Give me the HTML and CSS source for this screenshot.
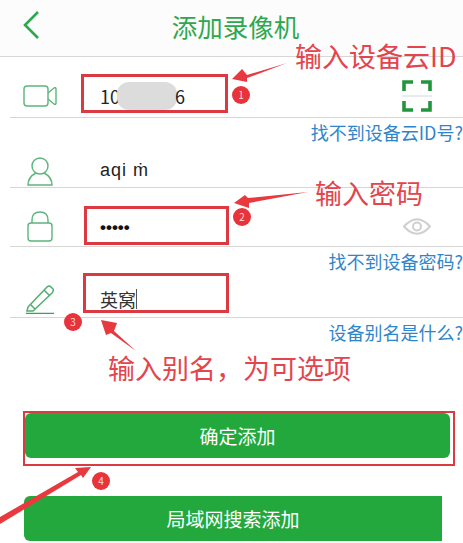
FILE: index.html
```html
<!DOCTYPE html>
<html lang="zh-CN">
<head>
    <meta charset="UTF-8">
    <meta name="viewport" content="width=device-width, initial-scale=1.0">
    <title>添加录像机</title>
    <link rel="stylesheet" href="styles.css">
</head>
<body>
    <div class="page">
        <div class="header">
            <svg class="back" width="20" height="30" viewBox="0 0 20 30"><path d="M17 2 L4 15 L17 28" fill="none" stroke="#2ea84f" stroke-width="2.6"/></svg>
            <h1>添加录像机</h1>
        </div>

        <div class="row row-id">
            <div class="row-icon">
                <svg width="34" height="22" viewBox="0 0 34 22" fill="none" stroke="#5db47c" stroke-width="1.4"><rect x="1" y="1" width="24" height="20" rx="3"/><path d="M25 8 L31 3 Q33 2 33 4 V18 Q33 20 31 19 L25 14"/></svg>
            </div>
            <div class="value">10<span class="smudge"></span><span class="tail">6</span></div>
            <svg class="scan" width="30" height="32" viewBox="0 0 30 32" fill="none" stroke="#23963c" stroke-width="3.6"><path d="M2 11 V2 H11 M19 2 H28 V11 M2 21 V30 H11 M19 30 H28 V21"/><path d="M0 16 H30" stroke="#d6d6d6" stroke-width="1"/></svg>
        </div>
        <div class="hint hint-id">找不到设备云ID号?</div>

        <div class="row row-user">
            <div class="row-icon">
                <svg width="26" height="29" viewBox="0 0 26 29" fill="none" stroke="#5db47c" stroke-width="1.4"><circle cx="13" cy="9" r="8"/><path d="M9 16 Q1 20 1 28 H25 Q25 20 17 16"/></svg>
            </div>
            <div class="value value-user">aqi ṁ</div>
        </div>

        <div class="row row-pass">
            <div class="row-icon">
                <svg width="26" height="31" viewBox="0 0 26 31" fill="none" stroke="#5db47c" stroke-width="1.4"><rect x="1" y="12" width="24" height="18" rx="3"/><path d="M5 12 V9 Q5 1 13 1 Q21 1 21 9 V12"/></svg>
            </div>
            <div class="value dots">•••••</div>
            <svg class="eye" width="28" height="19" viewBox="0 0 28 19" fill="none" stroke="#cfcfcf" stroke-width="2"><path d="M1 9.5 Q14 -5 27 9.5 Q14 24 1 9.5 Z"/><circle cx="14" cy="9.5" r="4"/></svg>
        </div>
        <div class="hint hint-pass">找不到设备密码?</div>

        <div class="row row-name">
            <div class="row-icon">
                <svg width="30" height="30" viewBox="0 0 30 30" fill="none" stroke="#4fae6f" stroke-width="1.5"><path d="M3 23 L22 3 Q24 1 26 3 L28 5 Q29 7 27 9 L8 27 L2 27 Z M19 6 L25 12 M5 20 L10 25"/><path d="M1 29.5 H29" stroke="#2ea84f"/></svg>
            </div>
            <div class="value value-name">英窝<span class="caret"></span></div>
        </div>
        <div class="hint">设备别名是什么?</div>

        <button class="btn btn-add">确定添加</button>
        <button class="btn btn-lan">局域网搜索添加</button>

        <!-- red notes drawn over the screenshot -->
        <div class="mark mark-1"></div>
        <div class="mark mark-2"></div>
        <div class="mark mark-3"></div>
        <div class="mark mark-4"></div>

        <svg class="arrows" width="463" height="543" viewBox="0 0 463 543" fill="#e8393f">
            <polygon points="287,63 247,75 242,69 232,79 247,82 247,78"/>
            <polygon points="308,192 248,198 245,195 234,203 249,208 249,203"/>
            <polygon points="136,351 114,331 117,323 101,320 106,335 111,333"/>
            <polygon points="0,517 78,472 75,468 91,467 83,478 81,475 0,524"/>
        </svg>

        <span class="badge badge-1">1</span>
        <span class="badge badge-2">2</span>
        <span class="badge badge-3">3</span>
        <span class="badge badge-4">4</span>

        <div class="note note-id">输入设备云ID</div>
        <div class="note note-pass">输入密码</div>
        <div class="note note-name">输入别名，为可选项</div>
    </div>
</body>
</html>
```

FILE: styles.css
```css
* {
    box-sizing: border-box;
}
html, body {
    margin: 0;
    padding: 0;
    background-color: white;
}
body {
    font-family: "Noto Sans CJK SC", "Liberation Sans", sans-serif;
}
.page {
    position: relative;
    width: 463px;
    height: 543px;
    overflow: hidden;
    background-color: white;
}
.header {
    display: flex;
    align-items: center;
    justify-content: center;
    position: relative;
    height: 57px;
    padding-left: 8px;
    background-color: #fcfcfc;
    border-bottom: 1px solid #d6d6d6;
}
.header h1 {
    margin: 0 0 5px 0;
    font-size: 25.5px;
    font-weight: 400;
    color: #2ea84f;
}
.back {
    position: absolute;
    left: 21px;
    top: 10px;
}
.row {
    display: flex;
    align-items: center;
    margin-left: 10px;
    border-bottom: 1px solid #d6d6d6;
}
.row-id {
    height: 61px;
    padding-top: 18px;
}
.row-user {
    height: 42px;
    padding-top: 10px;
}
.row-pass {
    height: 59px;
    padding-top: 18px;
}
.row-name {
    height: 43px;
    padding-top: 6px;
}
.row-icon {
    display: flex;
    justify-content: center;
    width: 90px;
    padding-right: 30px;
}
.value {
    flex: 1;
    display: flex;
    align-items: center;
    font-size: 18px;
    color: #222;
}
.smudge {
    width: 60px;
    height: 28px;
    margin-left: -3px;
    background-color: #dcdcdc;
    border-radius: 12px;
}
.tail {
    margin-left: -2px;
}
.value-user {
    font-family: "Liberation Sans", sans-serif;
    font-size: 18px;
    letter-spacing: 1px;
    margin-top: -2px;
}
.dots {
    font-family: "Liberation Sans", sans-serif;
    font-size: 17px;
    line-height: 20px;
    margin-top: 4px;
    font-weight: 700;
    color: #111;
}
.value-name {
    font-size: 18px;
    color: #333;
}
.caret {
    width: 1px;
    height: 20px;
    background-color: #555;
}
.scan {
    margin-right: 31px;
}
.eye {
    margin-right: 32px;
}
.hint {
    height: 28px;
    line-height: 28px;
    text-align: right;
    font-size: 18px;
    color: #2f85c9;
}
.btn {
    display: block;
    border: none;
    height: 45px;
    padding: 0;
    border-radius: 6px;
    background-color: #22a83c;
    color: white;
    font-family: inherit;
    font-size: 19px;
}
.btn-add {
    width: 425px;
    margin: 67px 0 0 25px;
}
.btn-lan {
    width: 418px;
    margin: 38px 0 0 24px;
    border-radius: 6px 0 0 6px;
}
.mark {
    position: absolute;
    border: 3px solid #dc3a42;
}
.mark-1 {
    left: 81px;
    top: 74px;
    width: 147px;
    height: 39px;
}
.mark-2 {
    left: 84px;
    top: 206px;
    width: 145px;
    height: 39px;
}
.mark-3 {
    left: 83px;
    top: 273px;
    width: 146px;
    height: 40px;
}
.mark-4 {
    left: 23px;
    top: 411px;
    width: 432px;
    height: 55px;
    border-width: 2.5px;
}
.arrows {
    position: absolute;
    left: 0;
    top: 0;
}
.badge {
    position: absolute;
    width: 18px;
    height: 18px;
    line-height: 18px;
    border-radius: 50%;
    background-color: #e8333a;
    color: #fbdcdc;
    font-size: 10px;
    text-align: center;
}
.badge-1 {
    left: 232px;
    top: 86px;
}
.badge-2 {
    left: 233px;
    top: 208px;
}
.badge-3 {
    left: 64px;
    top: 313px;
}
.badge-4 {
    left: 92px;
    top: 472px;
}
.note {
    position: absolute;
    font-size: 27px;
    line-height: 32px;
    white-space: nowrap;
    color: #e4444c;
}
.note-id {
    left: 295px;
    top: 40px;
}
.note-pass {
    left: 315px;
    top: 177px;
}
.note-name {
    left: 108px;
    top: 352px;
}
```
